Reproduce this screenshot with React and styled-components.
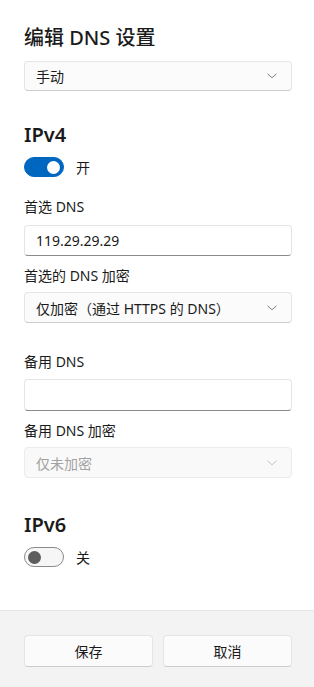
import React from "react";
import styled, { createGlobalStyle } from "styled-components";

const GlobalStyle = createGlobalStyle`
  html, body {
    margin: 0;
    padding: 0;
    background: #ffffff;
  }
  body {
    font-family: "Noto Sans", "Noto Sans CJK SC", sans-serif;
    color: #1a1a1a;
    font-size: 14px;
  }
  * {
    box-sizing: border-box;
  }
`;

const Chevron = () => (
  <svg width="10" height="6" viewBox="0 0 10 6" fill="none">
    <path d="M0.8 1 L5 4.8 L9.2 1" stroke="currentColor" strokeWidth="0.9" strokeLinecap="round" strokeLinejoin="round" />
  </svg>
);

const App = () => {
  return (
    <>
      <GlobalStyle />
      <Page>
        <Content>
          <Title>编辑 DNS 设置</Title>
          <Select $mt={9} $h={30}>
            <span>手动</span>
            <Chevron />
          </Select>

          <Heading $mt={30}>IPv4</Heading>
          <ToggleRow>
            <Toggle $on>
              <Knob $on />
            </Toggle>
            <span>开</span>
          </ToggleRow>

          <Label $mt={20}>首选 DNS</Label>
          <Input $mt={8} defaultValue="119.29.29.29" />

          <Label $mt={10}>首选的 DNS 加密</Label>
          <Select $mt={6}>
            <span>仅加密（通过 HTTPS 的 DNS）</span>
            <Chevron />
          </Select>

          <Label $mt={29}>备用 DNS</Label>
          <Input $mt={7} $h={32} defaultValue="" />

          <Label $mt={10}>备用 DNS 加密</Label>
          <Select $mt={6} $disabled>
            <span>仅未加密</span>
            <Chevron />
          </Select>

          <Heading $mt={33}>IPv6</Heading>
          <ToggleRow>
            <Toggle>
              <Knob />
            </Toggle>
            <span>关</span>
          </ToggleRow>
        </Content>
        <Footer>
          <Button>保存</Button>
          <Button>取消</Button>
        </Footer>
      </Page>
    </>
  );
};

export default App;

const Page = styled.div`
  width: 314px;
  height: 687px;
  display: flex;
  flex-direction: column;
  overflow: hidden;
`;

const Content = styled.div`
  flex: 1;
  padding: 24px 22px 0 24px;
  display: flex;
  flex-direction: column;
`;

const Title = styled.h1`
  margin: 0;
  font-size: 20px;
  line-height: 28px;
  font-weight: 500;
  color: #1b1b1b;
`;

const Heading = styled.h2`
  margin: ${(p) => p.$mt || 0}px 0 0;
  font-size: 20px;
  line-height: 28px;
  font-weight: 600;
  color: #1b1b1b;
`;

const Label = styled.div`
  margin-top: ${(p) => p.$mt || 0}px;
  font-size: 14px;
  line-height: 20px;
`;

const Select = styled.div`
  margin-top: ${(p) => p.$mt || 0}px;
  height: ${(p) => p.$h || 31}px;
  display: flex;
  align-items: center;
  justify-content: space-between;
  padding: 0 14px 0 11px;
  border-radius: 4px;
  font-size: 14px;
  background: ${(p) => (p.$disabled ? "#f9f9f9" : "#fbfbfb")};
  border: 1px solid ${(p) => (p.$disabled ? "#ececec" : "#e5e5e5")};
  border-bottom-color: ${(p) => (p.$disabled ? "#ececec" : "#cccccc")};
  color: ${(p) => (p.$disabled ? "#a2a2a2" : "#1a1a1a")};

  svg {
    color: ${(p) => (p.$disabled ? "#bdbdbd" : "#707070")};
  }
`;

const Input = styled.input`
  margin-top: ${(p) => p.$mt || 0}px;
  height: ${(p) => p.$h || 31}px;
  width: 100%;
  padding: 0 11px;
  font: inherit;
  font-size: 14px;
  color: #1a1a1a;
  background: #ffffff;
  border: 1px solid #e5e5e5;
  border-bottom-color: #8a8a8a;
  border-radius: 4px;
  outline: none;
`;

const ToggleRow = styled.div`
  margin-top: 8px;
  display: flex;
  align-items: center;
  gap: 12px;
  height: 20px;
  font-size: 14px;
`;

const Toggle = styled.div`
  width: 40px;
  height: 20px;
  border-radius: 10px;
  display: flex;
  align-items: center;
  justify-content: ${(p) => (p.$on ? "flex-end" : "flex-start")};
  padding: 0 3px;
  background: ${(p) => (p.$on ? "#0067c0" : "#f6f6f6")};
  border: 1px solid ${(p) => (p.$on ? "#0067c0" : "#8a8a8a")};
`;

const Knob = styled.div`
  width: 13px;
  height: 13px;
  border-radius: 50%;
  background: ${(p) => (p.$on ? "#ffffff" : "#5d5d5d")};
`;

const Footer = styled.div`
  height: 77px;
  background: #f3f3f3;
  border-top: 1px solid #e5e5e5;
  padding: 24px 22px 0 24px;
  display: grid;
  grid-template-columns: 1fr 1fr;
  gap: 10px;
  align-items: start;
`;

const Button = styled.button`
  height: 32px;
  font: inherit;
  font-size: 14px;
  color: #1a1a1a;
  background: #fbfbfb;
  border: 1px solid #e5e5e5;
  border-bottom-color: #cccccc;
  border-radius: 4px;
`;
